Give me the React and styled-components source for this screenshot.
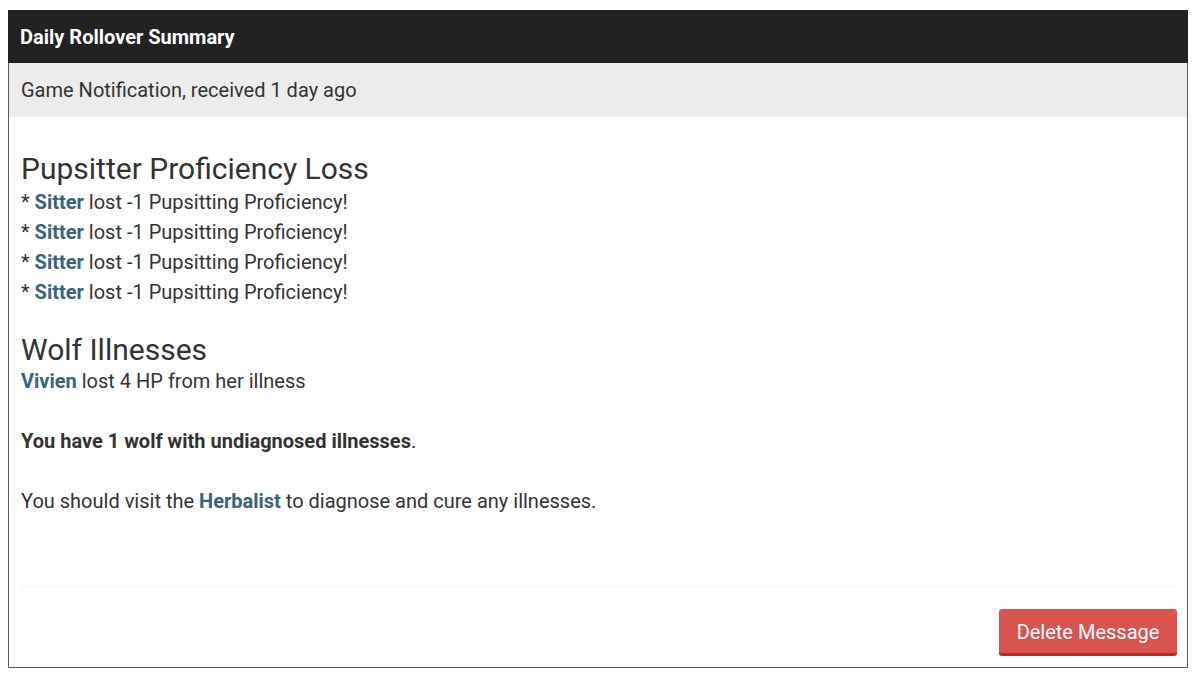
import React from "react";
import styled, { createGlobalStyle } from "styled-components";

const Global = createGlobalStyle`
  html, body { margin: 0; padding: 0; background: #fff; }
  body { font-family: Roboto, "Liberation Sans", sans-serif; color: #333; }
`;

const Page = styled.div`
  padding: 10px 12px 0 8px;
`;

const Panel = styled.div`
  width: 1180px;
  height: 658px;
  box-sizing: border-box;
  border: 1px solid #5a5a5a;
  border-top-color: #222;
  display: flex;
  flex-direction: column;
  background: #fff;
`;

const Header = styled.div`
  height: 53px;
  background: #222;
  color: #fff;
  font-weight: 700;
  font-size: 20px;
  display: flex;
  align-items: center;
  margin: -1px -1px 0 -1px;
  padding: 0 11px 0 12px;
`;

const SubHeader = styled.div`
  height: 54px;
  background: #ececec;
  color: #333;
  font-size: 20px;
  display: flex;
  align-items: center;
  padding: 0 12px;
`;

const Body = styled.div`
  flex: 1;
  padding: 37px 10px 0 12px;
  display: flex;
  flex-direction: column;
`;

const Heading = styled.h3`
  font-size: 30px;
  font-weight: 400;
  line-height: 30px;
  margin: ${(p) => (p.$first ? "0 0 3px 0" : "28px 0 1px 0")};
  color: #333;
`;

const Line = styled.div`
  font-size: 20px;
  line-height: 30px;
  min-height: 30px;
`;

const Link = styled.a`
  color: #3a6478;
  font-weight: 700;
  text-decoration: none;
`;

const Strong = styled.strong`
  font-weight: 700;
`;

const Rule = styled.hr`
  border: 0;
  border-top: 1px solid #eeeeee;
  margin: auto 1px 0 0;
  height: 0;
`;

const Footer = styled.div`
  display: flex;
  justify-content: flex-end;
  padding: 22px 0 11px 0;
`;

const DeleteButton = styled.button`
  background: #d9534f;
  color: #fff;
  border: 0;
  border-bottom: 3px solid #b52b27;
  border-radius: 3px;
  font-family: Roboto, "Liberation Sans", sans-serif;
  font-size: 20px;
  height: 47px;
  width: 178px;
  padding: 1px 0 0 0;
  cursor: pointer;
`;

const sitterLines = [0, 1, 2, 3];

export default function App() {
  return (
    <>
      <Global />
      <Page>
        <Panel>
          <Header>Daily Rollover Summary</Header>
          <SubHeader>Game Notification, received 1 day ago</SubHeader>
          <Body>
            <Heading $first>Pupsitter Proficiency Loss</Heading>
            {sitterLines.map((i) => (
              <Line key={i}>
                * <Link href="#">Sitter</Link> lost -1 Pupsitting Proficiency!
              </Line>
            ))}
            <Heading>Wolf Illnesses</Heading>
            <Line>
              <Link href="#">Vivien</Link> lost 4 HP from her illness
            </Line>
            <Line />
            <Line>
              <Strong>You have 1 wolf with undiagnosed illnesses</Strong>.
            </Line>
            <Line />
            <Line>
              You should visit the <Link href="#">Herbalist</Link> to diagnose and cure any illnesses.
            </Line>
            <Rule />
            <Footer>
              <DeleteButton>Delete Message</DeleteButton>
            </Footer>
          </Body>
        </Panel>
      </Page>
    </>
  );
}
